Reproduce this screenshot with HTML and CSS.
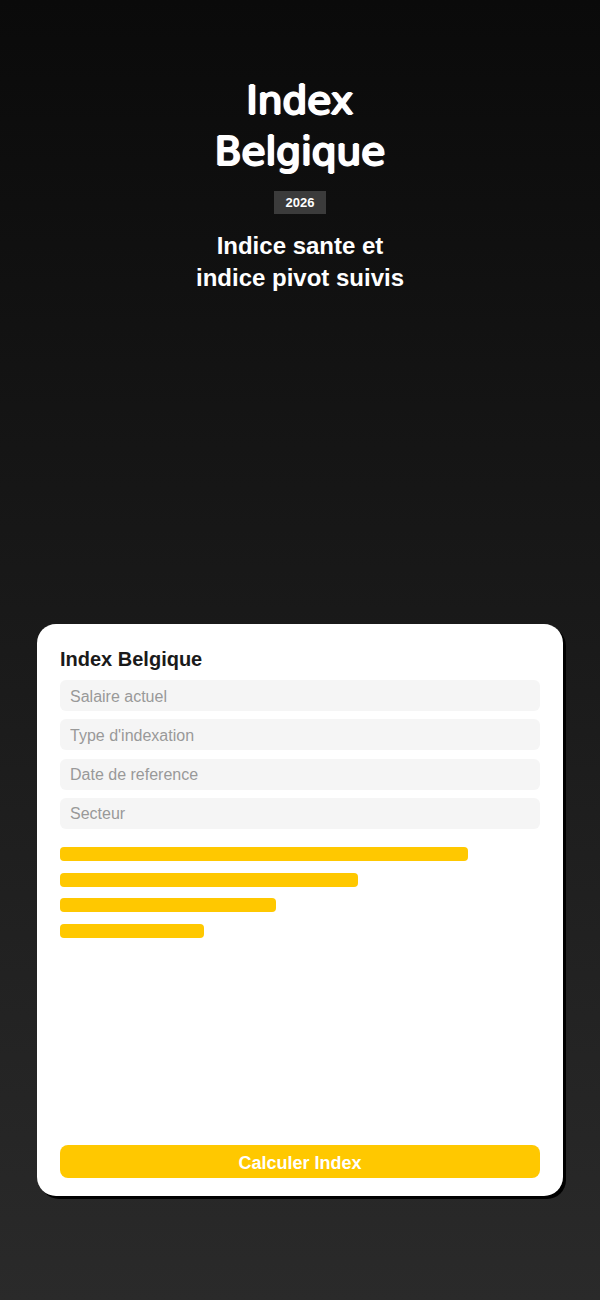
FILE: index.html
```html
<!DOCTYPE html>
<html lang="fr">
<head>
    <meta charset="UTF-8">
    <meta name="viewport" content="width=device-width, initial-scale=1.0">
    <title>Index Belgique 2026</title>
    <link rel="stylesheet" href="styles.css">
</head>
<body>
    <header class="hero">
        <h1>Index<br>Belgique</h1>
        <span class="year">2026</span>
        <p class="tagline">Indice sante et<br>indice pivot suivis</p>
    </header>

    <form class="card">
        <h2>Index Belgique</h2>
        <div class="fields">
            <input type="text" name="salaire" aria-label="Salaire actuel" placeholder="Salaire actuel">
            <input type="text" name="type" aria-label="Type d'indexation" placeholder="Type d'indexation">
            <input type="text" name="date" aria-label="Date de reference" placeholder="Date de reference">
            <input type="text" name="secteur" aria-label="Secteur" placeholder="Secteur">
        </div>
        <div class="bars">
            <div class="bar" style="width: 85%"></div>
            <div class="bar" style="width: 62%"></div>
            <div class="bar" style="width: 45%"></div>
            <div class="bar" style="width: 30%"></div>
        </div>
        <button type="button">Calculer Index</button>
    </form>
</body>
</html>
```
FILE: styles.css
```css
* {
    box-sizing: border-box;
}
body {
    margin: 0;
    min-height: 100vh;
    padding: 75px 37px 8vh;
    display: flex;
    flex-direction: column;
    justify-content: space-between;
    font-family: "Liberation Sans", Arial, sans-serif;
    background: linear-gradient(#0a0a0a, #2a2a2a);
}
.hero {
    display: flex;
    flex-direction: column;
    align-items: center;
    text-align: center;
    color: white;
}
/* the shadows thicken the strokes and round their ends */
h1 {
    margin: 0 0 14px;
    font-family: "Arial Rounded MT Bold", "DejaVu Sans", sans-serif;
    font-size: 39px;
    line-height: 51px;
    font-weight: normal;
    text-shadow: 1px 0 1px white, -1px 0 1px white, 1px 0 white, -1px 0 white, 0 1px white, 0 -1px white;
}
.year {
    padding: 4px 12px;
    background-color: #3b3b3b;
    font-size: 13px;
    line-height: 15px;
    font-weight: bold;
}
.tagline {
    margin: 16px 0 0;
    font-size: 24px;
    line-height: 32px;
    font-weight: bold;
}
.card {
    display: flex;
    flex-direction: column;
    min-height: 44vh;
    padding: 23px 23px 18px;
    border-radius: 19px;
    background-color: white;
    box-shadow: 3px 3px 0 black;
}
h2 {
    margin: 0 0 9px;
    font-size: 20px;
    line-height: 24px;
    color: #1a1a1a;
}
.fields {
    display: flex;
    flex-direction: column;
    justify-content: space-between;
    height: 149px;
}
input {
    width: 100%;
    height: 31px;
    padding: 2px 10px 0;
    border: none;
    border-radius: 6px;
    background-color: #f5f5f5;
    font-family: inherit;
    font-size: 16px;
    color: #1a1a1a;
}
input::placeholder {
    color: #999;
}
.bars {
    display: flex;
    flex-direction: column;
    justify-content: space-between;
    height: 91px;
    margin: 18px 0;
}
.bar {
    height: 14px;
    border-radius: 4px;
    background-color: #ffc800;
}
button {
    height: 33px;
    margin-top: auto;
    padding: 3px 6px 0;
    border: none;
    border-radius: 8px;
    background-color: #ffc800;
    color: white;
    font-family: inherit;
    font-size: 18px;
    font-weight: bold;
    cursor: pointer;
}
```
